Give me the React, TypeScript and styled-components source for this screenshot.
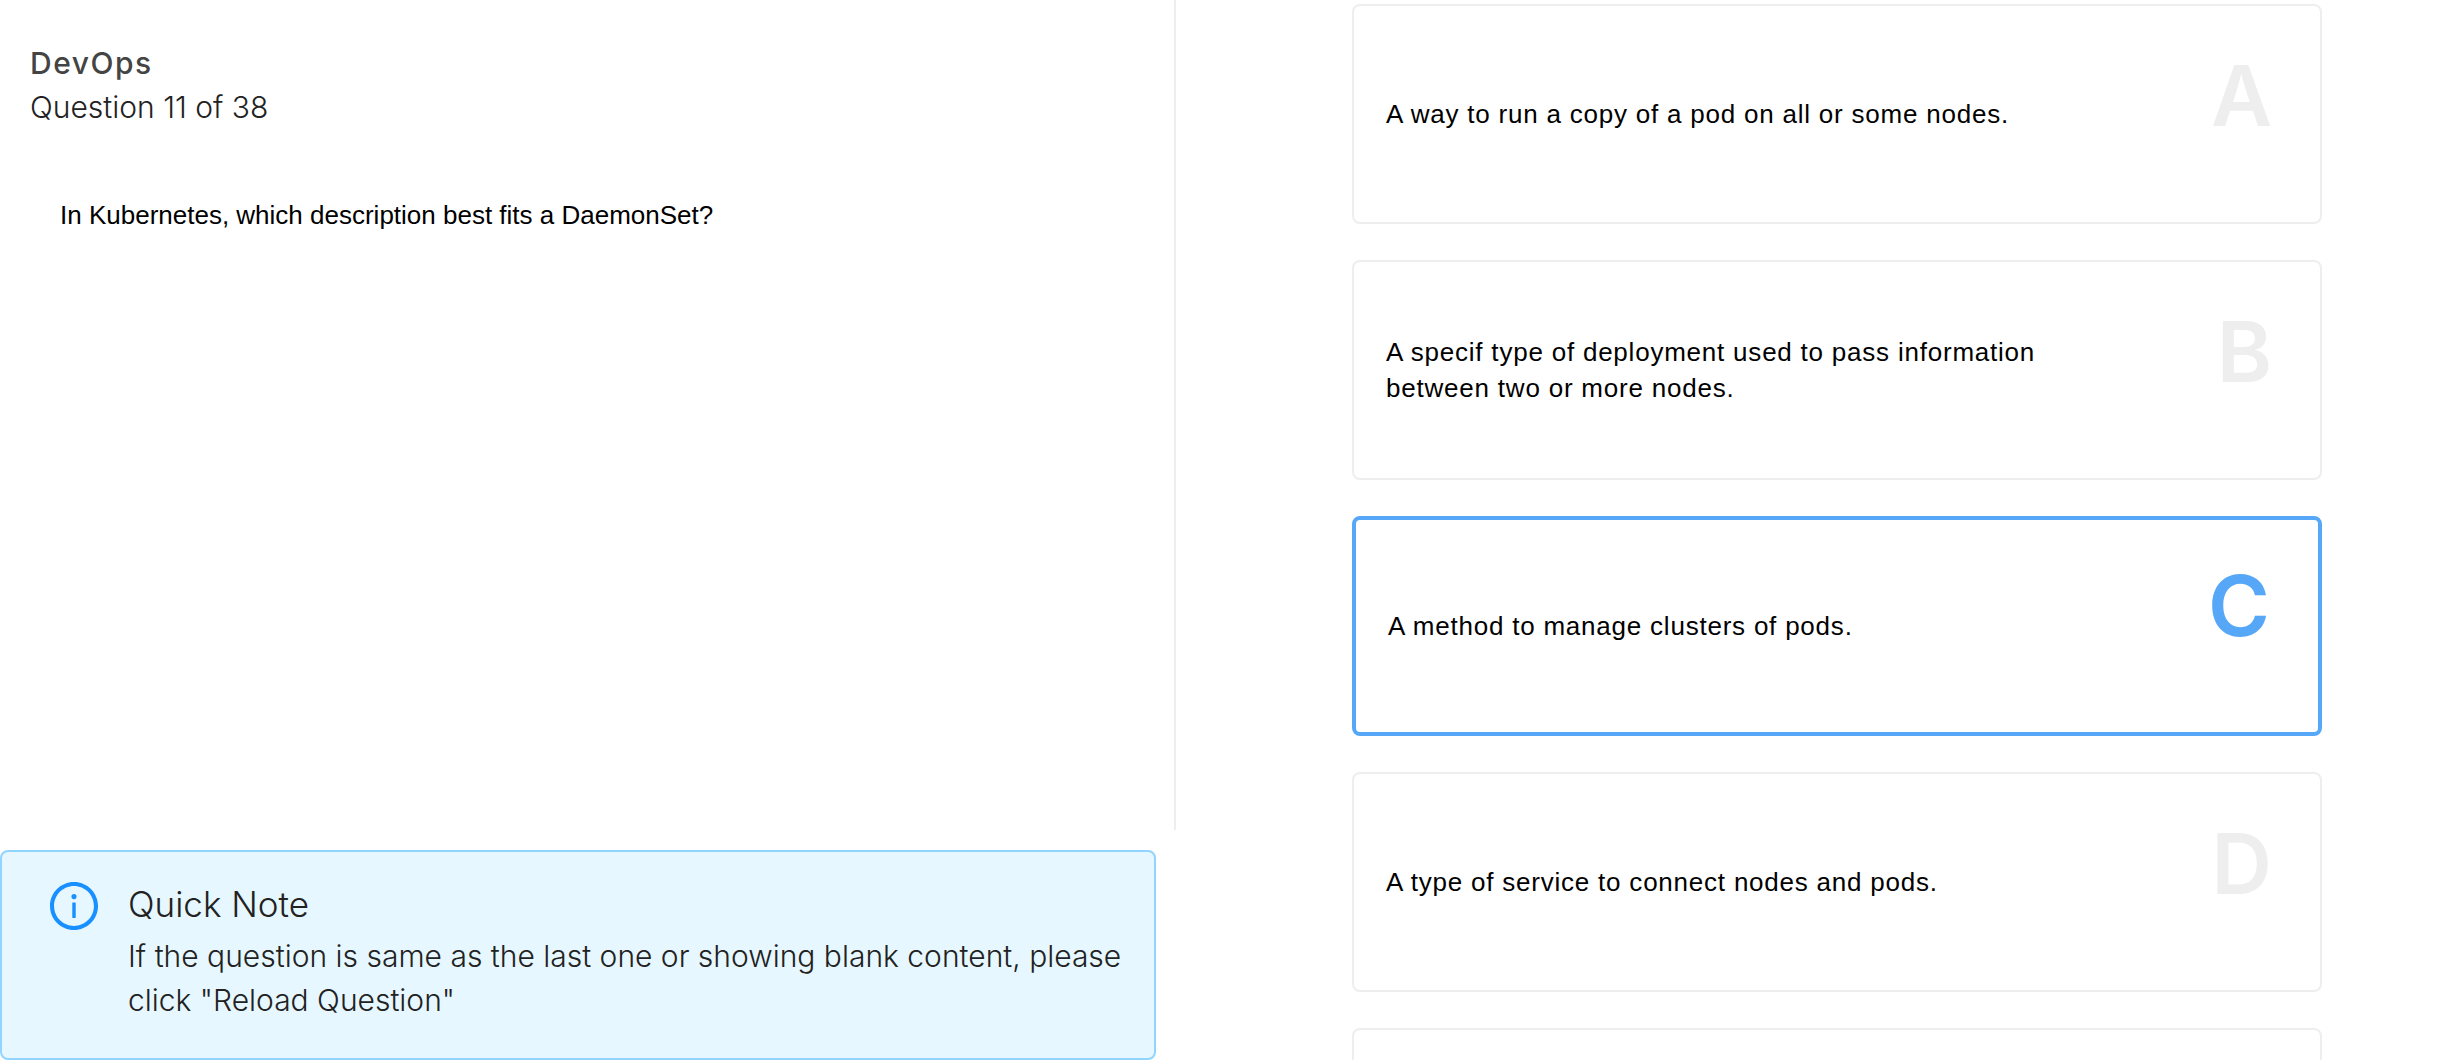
import React, { useState } from "react";
import styled, { createGlobalStyle, css } from "styled-components";

const GlobalStyle = createGlobalStyle`
  *, *::before, *::after { box-sizing: border-box; }
  body {
    margin: 0;
    background: #fff;
    color: #222;
    font-family: Inter, "Liberation Sans", sans-serif;
  }
`;

const Page = styled.main`
  display: flex;
  height: 100vh;
`;

const QuestionColumn = styled.section`
  display: flex;
  flex-direction: column;
  gap: 20px;
  flex: 0 0 48.2%;
`;

const QuestionPanel = styled.div`
  flex: 1;
  padding: 41px 30px 0;
  border-right: 2px solid #eee;
`;

const Category = styled.h1`
  margin: 0;
  font-size: 30px;
  font-weight: 500;
  line-height: 44px;
  letter-spacing: 0.05em;
  color: #444;
`;

const Progress = styled.p`
  margin: 0;
  font-size: 30px;
  font-weight: 300;
  line-height: 44px;
`;

const QuestionText = styled.p`
  margin: 68px 0 0;
  padding: 0 30px;
  font-family: "Liberation Sans", Arial, sans-serif;
  font-size: 26px;
  line-height: 36px;
  color: #000;
`;

const Note = styled.aside`
  display: flex;
  gap: 30px;
  margin-right: 20px;
  padding: 30px 28px 36px 48px;
  border: 2px solid #91d5ff;
  border-radius: 8px;
  background: #e6f7ff;
`;

const NoteIcon = styled.svg`
  flex: none;
  width: 48px;
  height: 48px;
  fill: #1890ff;
`;

const NoteTitle = styled.h2`
  margin: 0 0 8px;
  font-size: 35px;
  font-weight: 300;
  line-height: 44px;
`;

const NoteText = styled.p`
  margin: 0;
  font-size: 30px;
  font-weight: 300;
  line-height: 44px;
`;

const AnswerList = styled.form`
  display: flex;
  flex: 1;
  flex-direction: column;
  gap: 36px;
  padding: 4px 118px 36px 176px;
  overflow-y: auto;
  scrollbar-width: none;
`;

const answerColors = (selected: boolean) =>
  selected
    ? css`
        padding: 44px 48px 44px 32px;
        border: 4px solid #57a7f8;
        --letter: #57a7f8;
      `
    : css`
        padding: 48px 48px 48px 32px;
        border: 2px solid #eee;
        --letter: #eee;
      `;

const AnswerCard = styled.label<{ $selected: boolean }>`
  display: flex;
  flex: none;
  justify-content: space-between;
  min-height: 220px;
  border-radius: 8px;
  cursor: pointer;
  ${(p) => answerColors(p.$selected)}
`;

const AnswerRadio = styled.input`
  position: absolute;
  opacity: 0;
  pointer-events: none;
`;

const AnswerText = styled.span`
  align-self: center;
  max-width: 80%;
  font-family: "Liberation Sans", Arial, sans-serif;
  font-size: 26px;
  line-height: 36px;
  letter-spacing: 0.03em;
  color: #000;
`;

const AnswerLetter = styled.span`
  font-size: 84px;
  font-weight: 600;
  line-height: 84px;
  color: var(--letter);
`;

const answers = [
  { letter: "A", text: "A way to run a copy of a pod on all or some nodes." },
  { letter: "B", text: "A specif type of deployment used to pass information between two or more nodes." },
  { letter: "C", text: "A method to manage clusters of pods." },
  { letter: "D", text: "A type of service to connect nodes and pods." },
  { letter: "", text: "" },
];

export default function App() {
  const [selected, setSelected] = useState(2);

  return (
    <>
      <GlobalStyle />
      <Page>
        <QuestionColumn>
          <QuestionPanel>
            <Category>DevOps</Category>
            <Progress>Question 11 of 38</Progress>
            <QuestionText>In Kubernetes, which description best fits a DaemonSet?</QuestionText>
          </QuestionPanel>
          <Note>
            <NoteIcon viewBox="64 64 896 896" aria-hidden="true">
              <path d="M512 64C264.6 64 64 264.6 64 512s200.6 448 448 448 448-200.6 448-448S759.4 64 512 64zm0 820c-205.4 0-372-166.6-372-372s166.6-372 372-372 372 166.6 372 372-166.6 372-372 372z" />
              <path d="M464 336a48 48 0 1 0 96 0 48 48 0 1 0-96 0zm72 112h-48c-4.4 0-8 3.6-8 8v272c0 4.4 3.6 8 8 8h48c4.4 0 8-3.6 8-8V456c0-4.4-3.6-8-8-8z" />
            </NoteIcon>
            <div>
              <NoteTitle>Quick Note</NoteTitle>
              <NoteText>
                If the question is same as the last one or showing blank content, please click "Reload Question"
              </NoteText>
            </div>
          </Note>
        </QuestionColumn>
        <AnswerList>
          {answers.map((answer, index) => (
            <AnswerCard key={index} $selected={index === selected}>
              <AnswerRadio
                type="radio"
                name="answer"
                checked={index === selected}
                onChange={() => setSelected(index)}
              />
              <AnswerText>{answer.text}</AnswerText>
              <AnswerLetter>{answer.letter}</AnswerLetter>
            </AnswerCard>
          ))}
        </AnswerList>
      </Page>
    </>
  );
}
